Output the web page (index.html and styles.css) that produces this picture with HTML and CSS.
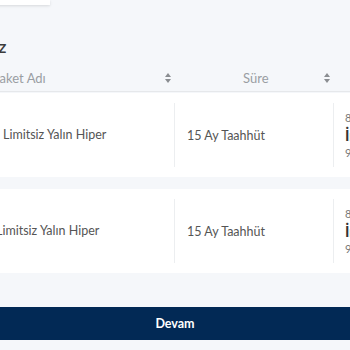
FILE: index.html
```html
<!DOCTYPE html>
<html lang="tr">
<head>
  <meta charset="UTF-8" />
  <meta name="viewport" content="width=device-width, initial-scale=1" />
  <title>Paketlerim</title>
  <link rel="stylesheet" href="styles.css">
</head>
<body>
  <div class="top-card"></div>

  <h2 class="title">Paketleriniz</h2>

  <div class="table">
    <div class="table-head">
      <div class="th th-name">
        <span>Paket Adı</span>
        <span class="sort"></span>
      </div>
      <div class="th th-term">
        <span>Süre</span>
        <span class="sort"></span>
      </div>
      <div class="th"></div>
    </div>

    <div class="row">
      <div class="cell cell-name">Limitsiz Yalın Hiper</div>
      <div class="cell cell-term">15 Ay Taahhüt</div>
      <div class="cell cell-price">
        <span class="small">89,90 TL</span>
        <strong>İndirimli</strong>
        <span class="small">99,90 TL</span>
      </div>
    </div>

    <div class="row row-alt">
      <div class="cell cell-name">Limitsiz Yalın Hiper</div>
      <div class="cell cell-term">15 Ay Taahhüt</div>
      <div class="cell cell-price">
        <span class="small">89,90 TL</span>
        <strong>İndirimli</strong>
        <span class="small">99,90 TL</span>
      </div>
    </div>
  </div>

  <button class="next-button">Devam</button>
</body>
</html>
```

FILE: styles.css
```css
body {
  margin: 0;
  padding: 0;
  background-color: #f5f7fa;
  color: #555;
  font-family: Lato, "Open Sans", sans-serif;
  width: 350px;
  height: 350px;
  overflow: hidden;
}
.top-card {
  width: 80px;
  height: 5px;
  margin-left: -30px;
  background-color: #fff;
  box-shadow: 0 1px 3px rgba(0, 0, 0, 0.12);
}
.title {
  margin: 28px 0 0 -86px;
  height: 26px;
  font-size: 18px;
  font-weight: 600;
  line-height: 26px;
  color: #3c3c3c;
}
.table {
  margin-left: -20px;
  width: 560px;
  margin-top: 3px;
}
.table-head {
  display: grid;
  grid-template-columns: 195px 159px 1fr;
  height: 29px;
  border-bottom: 1px solid #e6e8eb;
}
.th {
  display: flex;
  align-items: center;
  justify-content: space-between;
  padding-top: 3px;
  font-size: 13px;
  color: #9a9ea3;
}
.th-name {
  padding-left: 12px;
  padding-right: 7px;
}
.th-term {
  padding-left: 68px;
  padding-right: 7px;
}
.sort {
  width: 0;
  height: 10px;
  position: relative;
}
.sort::before,
.sort::after {
  content: "";
  position: absolute;
  left: -3px;
  border-left: 3px solid transparent;
  border-right: 3px solid transparent;
}
.sort::before {
  top: 0;
  border-bottom: 4px solid #8a8d91;
}
.sort::after {
  bottom: 0;
  border-top: 4px solid #8a8d91;
}
.row {
  display: grid;
  grid-template-columns: 195px 159px 1fr;
  background-color: #fff;
  padding: 10px 0;
  height: 64px;
  margin-top: 1px;
  margin-bottom: 12px;
}
.cell {
  display: flex;
  align-items: center;
  font-size: 12.5px;
  color: #555;
}
.cell-name {
  padding-left: 23px;
  border-right: 1px solid #eceef0;
  padding-bottom: 2px;
}
.row-alt .cell-name {
  padding-left: 16px;
}
.cell-term {
  padding-left: 12px;
  border-right: 1px solid #eceef0;
}
.cell-price {
  flex-direction: column;
  align-items: flex-start;
  justify-content: center;
  padding-left: 11px;
  gap: 2px;
}
.small {
  font-size: 11px;
  color: #777;
}
.cell-price strong {
  font-size: 15px;
  color: #333;
}
.next-button {
  display: block;
  width: 100%;
  height: 33px;
  margin-top: 34px;
  border: none;
  background-color: #022955;
  color: #fff;
  font-family: Lato, "Open Sans", sans-serif;
  font-size: 12.5px;
  font-weight: 700;
  cursor: pointer;
}
```
